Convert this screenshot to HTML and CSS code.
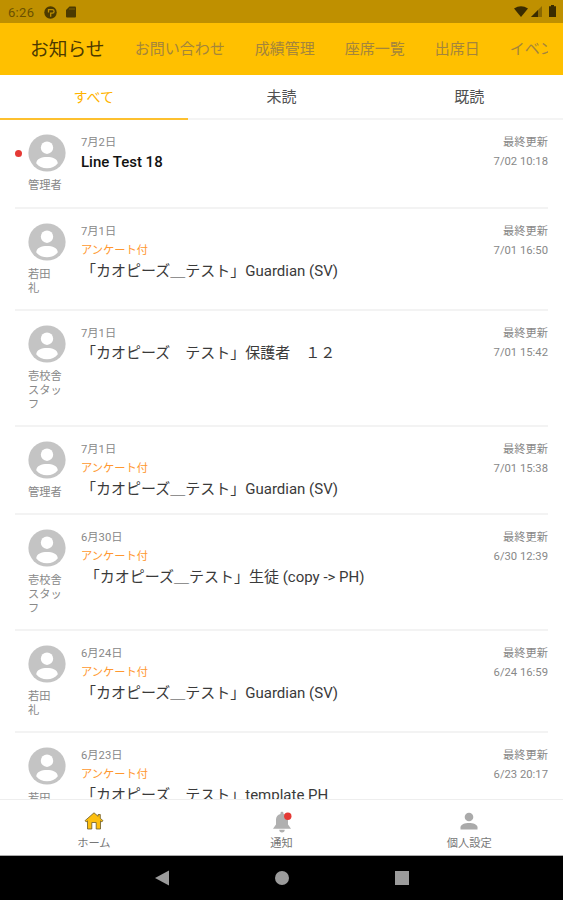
FILE: index.html
```html
<!DOCTYPE html>
<html lang="ja">
<head>
    <meta charset="UTF-8">
    <title>お知らせ</title>
    <link rel="stylesheet" href="styles.css">
</head>
<body>
    <svg class="defs">
        <symbol id="avatar" viewBox="0 0 38 38">
            <circle cx="19" cy="19" r="18.6" fill="#c4c4c4"/>
            <circle cx="19" cy="13.7" r="6.2" fill="#fff"/>
            <path d="M8.200 29.200C8.600 24.800 13.500 23 19 23s10.400 1.800 10.800 6.200C27.300 32.500 23.500 34.200 19 34.200S10.700 32.500 8.200 29.200z" fill="#fff"/>
        </symbol>
    </svg>

    <div class="status-bar">
        <span class="clock">6:26</span>
        <svg class="status-app" viewBox="0 0 13 13" width="13" height="13">
            <circle cx="6.500" cy="6.500" r="6.200" fill="#4c3a00"/>
            <path d="M4.500 6.500V3.600h3.800a1.800 1.800 0 0 1 0 3.600H6.700v3.600" fill="none" stroke="#bf9000" stroke-width="1.300"/>
        </svg>
        <svg class="status-sd" viewBox="0 0 10 12" width="10" height="12">
            <path d="M3.500 0.500H9a1 1 0 0 1 1 1v9a1 1 0 0 1-1 1H1a1 1 0 0 1-1-1V4z" fill="#4c3a00"/>
            <path d="M4 2v2M6 2v2M8 2v2" stroke="#8b6900" stroke-width="0.800"/>
        </svg>
        <div class="status-right">
            <svg viewBox="0 0 14 11" width="14" height="11"><path d="M0 2.500Q7-2 14 2.500L7 11z" fill="#3a2c00"/></svg>
            <svg viewBox="0 0 11 11" width="11" height="11">
                <path d="M0 11L11 0v11z" fill="#8a6800"/>
                <path d="M0 11L7 4v7z" fill="#3a2c00"/>
            </svg>
            <svg class="battery" viewBox="0 0 7 12" width="7" height="12"><path d="M2 0h3v1.200h2V12H0V1.200h2z" fill="#3a2c00"/></svg>
        </div>
    </div>

    <div class="top-nav">
        <div class="top-nav-scroll">
            <span class="current">お知らせ</span>
            <span>お問い合わせ</span>
            <span>成績管理</span>
            <span>座席一覧</span>
            <span>出席日</span>
            <span>イベント</span>
        </div>
    </div>

    <div class="tabs">
        <div class="tab active">すべて</div>
        <div class="tab">未読</div>
        <div class="tab">既読</div>
    </div>

    <div class="list">
        <div class="item unread">
            <div class="sender">
                <svg class="avatar"><use href="#avatar"/></svg>
                <div class="name">管理者</div>
            </div>
            <div class="content">
                <div class="date">7月2日</div>
                <div class="title">Line Test 18</div>
            </div>
            <div class="updated">最終更新<br>7/02 10:18</div>
        </div>

        <div class="item">
            <div class="sender">
                <svg class="avatar"><use href="#avatar"/></svg>
                <div class="name">若田<br>礼</div>
            </div>
            <div class="content">
                <div class="date">7月1日</div>
                <div class="survey">アンケート付</div>
                <div class="title">「カオピーズ＿テスト」Guardian (SV)</div>
            </div>
            <div class="updated">最終更新<br>7/01 16:50</div>
        </div>

        <div class="item">
            <div class="sender">
                <svg class="avatar"><use href="#avatar"/></svg>
                <div class="name">壱校舎<br>スタッ<br>フ</div>
            </div>
            <div class="content">
                <div class="date">7月1日</div>
                <div class="title">「カオピーズ　テスト」保護者　１２</div>
            </div>
            <div class="updated">最終更新<br>7/01 15:42</div>
        </div>

        <div class="item">
            <div class="sender">
                <svg class="avatar"><use href="#avatar"/></svg>
                <div class="name">管理者</div>
            </div>
            <div class="content">
                <div class="date">7月1日</div>
                <div class="survey">アンケート付</div>
                <div class="title">「カオピーズ＿テスト」Guardian (SV)</div>
            </div>
            <div class="updated">最終更新<br>7/01 15:38</div>
        </div>

        <div class="item">
            <div class="sender">
                <svg class="avatar"><use href="#avatar"/></svg>
                <div class="name">壱校舎<br>スタッ<br>フ</div>
            </div>
            <div class="content">
                <div class="date">6月30日</div>
                <div class="survey">アンケート付</div>
                <div class="title"> 「カオピーズ＿テスト」生徒 (copy -&gt; PH)</div>
            </div>
            <div class="updated">最終更新<br>6/30 12:39</div>
        </div>

        <div class="item">
            <div class="sender">
                <svg class="avatar"><use href="#avatar"/></svg>
                <div class="name">若田<br>礼</div>
            </div>
            <div class="content">
                <div class="date">6月24日</div>
                <div class="survey">アンケート付</div>
                <div class="title">「カオピーズ＿テスト」Guardian (SV)</div>
            </div>
            <div class="updated">最終更新<br>6/24 16:59</div>
        </div>

        <div class="item">
            <div class="sender">
                <svg class="avatar"><use href="#avatar"/></svg>
                <div class="name">若田<br>礼</div>
            </div>
            <div class="content">
                <div class="date">6月23日</div>
                <div class="survey">アンケート付</div>
                <div class="title">「カオピーズ　テスト」template PH</div>
            </div>
            <div class="updated">最終更新<br>6/23 20:17</div>
        </div>
    </div>

    <div class="bottom-nav">
        <div class="nav-item">
            <svg viewBox="0 0 20 20" width="20" height="20">
                <path d="M10 1.800L1 9.700l1.200 1.200L3.500 9.900V18h4.300v-6.500h4.400V18h4.300V9.900l1.300 1 1.200-1.200-2.700-2.400V3.500h-2.200v1.800z" fill="#fdbf0f" stroke="#6b5a2a" stroke-width="0.800"/>
            </svg>
            <span>ホーム</span>
        </div>
        <div class="nav-item">
            <svg viewBox="0 0 22 22" width="22" height="22">
                <path d="M11 0.800c.9 0 1.500.6 1.500 1.400v.7c2.900.7 4.500 3 4.500 5.700v5l3 4.200H2l3-4.200v-5c0-2.700 1.600-5 4.500-5.700v-.7c0-.8.6-1.400 1.500-1.400zM8.300 18.800h5.400a2.700 2.700 0 0 1-5.400 0z" fill="#b0b0b0"/>
                <circle cx="16.800" cy="5.200" r="3.700" fill="#e53935"/>
            </svg>
            <span>通知</span>
        </div>
        <div class="nav-item">
            <svg viewBox="0 0 20 20" width="20" height="20">
                <circle cx="10" cy="6" r="4.300" fill="#aaa"/>
                <path d="M1.500 18.500v-2.200C1.500 13.500 6 12 10 12s8.500 1.500 8.500 4.300v2.200z" fill="#aaa"/>
            </svg>
            <span>個人設定</span>
        </div>
    </div>

    <div class="system-bar">
        <svg viewBox="0 0 16 16" width="16" height="16"><path d="M1 8L15 0.500v15z" fill="#9b9b9b"/></svg>
        <svg viewBox="0 0 16 16" width="16" height="16"><circle cx="8" cy="8" r="7" fill="#9b9b9b"/></svg>
        <svg viewBox="0 0 16 16" width="16" height="16"><path d="M1 1h14v14H1z" fill="#9b9b9b"/></svg>
    </div>
</body>
</html>
```
FILE: styles.css
```css
body {
    font-family: Roboto, "Noto Sans CJK JP", sans-serif;
    background-color: #fff;
    color: #333;
    display: flex;
    flex-direction: column;
    height: 900px;
    margin: 0;
    overflow: hidden;
}

svg {
    display: block;
}

.defs {
    display: none;
}

.status-bar {
    display: flex;
    align-items: center;
    flex: none;
    height: 23px;
    box-sizing: border-box;
    padding: 1px 7px 0 8px;
    background-color: #bf9000;
}

.clock {
    font-size: 13px;
    letter-spacing: 0.3px;
    color: #6b5000;
}

.status-app {
    margin-left: 10px;
}

.status-sd {
    margin-left: 9px;
}

.status-right {
    display: flex;
    align-items: center;
    gap: 3px;
    margin-left: auto;
    margin-top: -2px;
}

.battery {
    margin-left: 4px;
}

.top-nav {
    flex: none;
    height: 52px;
    padding: 0 15px;
    background-color: #ffc000;
}

.top-nav-scroll {
    display: flex;
    align-items: center;
    gap: 30px;
    height: 49px;
    padding-left: 15px;
    overflow: hidden;
    white-space: nowrap;
    font-size: 15px;
    color: #a4853c;
}

.top-nav-scroll .current {
    font-size: 18.75px;
    color: #4d3a00;
}

.tabs {
    display: flex;
    flex: none;
    height: 45px;
}

.tab {
    flex: 1;
    box-sizing: border-box;
    border-bottom: 2px solid #f4f4f4;
    line-height: 44px;
    text-align: center;
    font-size: 15px;
    color: #505050;
}

.tab.active {
    font-size: 14px;
    color: #ffb300;
    border-bottom-color: #fdc02f;
}

.list {
    flex: 1;
    min-height: 0;
    overflow: hidden;
    padding: 0 15px;
}

.item {
    position: relative;
    display: flex;
    border-bottom: 2px solid #f3f3f3;
    padding: 14px 0 13px 13px;
    font-size: 11.25px;
    color: #888;
}

.item:first-child {
    padding-bottom: 14px;
}

/* unread dot */
.unread::before {
    content: "";
    position: absolute;
    left: 0;
    top: 30px;
    width: 7px;
    height: 7px;
    border-radius: 50%;
    background-color: #e53935;
}

.sender {
    width: 53px;
}

.avatar {
    width: 38px;
    height: 38px;
}

.name {
    margin-top: 7px;
    line-height: 14px;
}

.content {
    flex: 1;
}

.date {
    line-height: 17px;
}

.survey {
    margin-top: 2px;
    line-height: 18px;
    color: #ff9830;
}

.title {
    line-height: 22px;
    font-size: 15px;
    color: #3a3a3a;
    white-space: pre;
}

.unread .title {
    font-weight: 500;
    color: #111;
}

.updated {
    line-height: 19px;
    margin-top: -1px;
    text-align: right;
}

.bottom-nav {
    display: flex;
    flex: none;
    height: 57px;
    box-sizing: border-box;
    border-top: 1px solid #eee;
    border-bottom: 1px solid #aaa;
}

.nav-item {
    flex: 1;
    display: flex;
    flex-direction: column;
    align-items: center;
    justify-content: space-between;
    padding: 11px 0 3px;
    font-size: 11.25px;
    line-height: 16px;
    color: #777;
}

.system-bar {
    display: flex;
    flex: none;
    align-items: center;
    justify-content: center;
    gap: 104px;
    height: 44px;
    background-color: #000;
}
```
